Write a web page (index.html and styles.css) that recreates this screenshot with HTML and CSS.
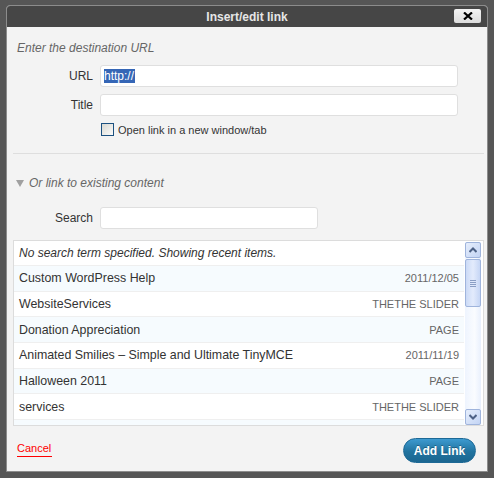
FILE: index.html
```html
<!DOCTYPE html>
<html>
<head>
<meta charset="utf-8">
<link rel="stylesheet" href="styles.css">
</head>
<body>
<div class="dialog">
  <div class="titlebar">
    <span class="title">Insert/edit link</span>
    <button class="close" type="button" aria-label="Close">
      <svg width="10" height="8" viewBox="0 0 10 8"><path d="M1 0.5 L9 7.5 M9 0.5 L1 7.5" stroke="#000" stroke-width="2.2" fill="none"/></svg>
    </button>
  </div>
  <div class="content">
    <p class="hint">Enter the destination URL</p>
    <div class="form">
      <label class="lbl">URL</label>
      <div class="field"><span class="sel">http://</span></div>
      <label class="lbl">Title</label>
      <div class="field"></div>
      <span></span>
      <div class="check"><span class="box"></span><span>Open link in a new window/tab</span></div>
    </div>
    <div class="divider"></div>
    <p class="toggle"><span class="tri"></span>Or link to existing content</p>
    <div class="form search-form">
      <label class="lbl">Search</label>
      <div class="field"></div>
    </div>
    <div class="results">
      <ul class="list">
        <li class="row note">No search term specified. Showing recent items.</li>
        <li class="row alt"><span>Custom WordPress Help</span><span class="meta">2011/12/05</span></li>
        <li class="row"><span>WebsiteServices</span><span class="meta">THETHE SLIDER</span></li>
        <li class="row alt"><span>Donation Appreciation</span><span class="meta">PAGE</span></li>
        <li class="row"><span>Animated Smilies – Simple and Ultimate TinyMCE</span><span class="meta">2011/11/19</span></li>
        <li class="row alt"><span>Halloween 2011</span><span class="meta">PAGE</span></li>
        <li class="row"><span>services</span><span class="meta">THETHE SLIDER</span></li>
        <li class="row alt"></li>
      </ul>
      <div class="scrollbar">
        <div class="sb-btn"><svg width="8" height="6" viewBox="0 0 8 6"><path d="M0.5 5 L4 1.5 L7.5 5" stroke="#4d6185" stroke-width="2" fill="none"/></svg></div>
        <div class="sb-thumb"><span></span><span></span><span></span><span></span></div>
        <div class="sb-track"></div>
        <div class="sb-btn"><svg width="8" height="6" viewBox="0 0 8 6"><path d="M0.5 1 L4 4.5 L7.5 1" stroke="#4d6185" stroke-width="2" fill="none"/></svg></div>
      </div>
    </div>
    <div class="footer">
      <a class="cancel" href="#">Cancel</a>
      <button class="add" type="button">Add Link</button>
    </div>
  </div>
</div>
</body>
</html>
```

FILE: styles.css
```css
* { box-sizing: border-box; }
html, body { margin: 0; padding: 0; }
body {
  background: #565656;
  font-family: "Liberation Sans", Arial, sans-serif;
  width: 494px;
  height: 478px;
  overflow: hidden;
  padding-top: 5px;
  padding-left: 6px;
}
.dialog {
  width: 482px;
  border: 1px solid #8c8c8c;
  border-radius: 4px 4px 0 0;
  background: #f3f3f3;
}
.titlebar {
  position: relative;
  height: 21px;
  background: #464646;
  border-radius: 3px 3px 0 0;
  display: flex;
  align-items: center;
  justify-content: center;
}
.title {
  color: #e6e6e6;
  font-weight: bold;
  font-size: 12px;
  line-height: 14px;
  margin-top: 1px;
}
.close {
  position: absolute;
  right: 6px;
  top: 3px;
  width: 27px;
  height: 14px;
  padding: 0;
  border: none;
  border-radius: 2px;
  background: linear-gradient(#f4f4f4, #dcdcdc);
  display: flex;
  align-items: center;
  justify-content: center;
}
.content { display: flex; flex-direction: column; }
.hint {
  margin: 14px 0 0 10px;
  font-size: 12px;
  line-height: 14px;
  font-style: italic;
  color: #666;
}
.form {
  margin: 10px 0 0 10px;
  display: grid;
  grid-template-columns: 76px 358px;
  column-gap: 7px;
  row-gap: 7px;
  align-items: center;
}
.lbl {
  text-align: right;
  font-size: 12px;
  line-height: 14px;
  color: #333;
}
.field {
  height: 22px;
  background: #fff;
  border: 1px solid #dfdfdf;
  border-radius: 3px;
  padding: 3px 0 0 3px;
  font-size: 12px;
  line-height: 14px;
}
.sel { background: #3566b6; color: #fff; display: inline-block; padding-right: 1px; }
.check {
  display: flex;
  align-items: center;
  height: 13px;
  font-size: 11px;
  color: #333;
}
.box {
  width: 13px;
  height: 13px;
  margin-left: 1px;
  margin-right: 4px;
  border: 1px solid #1c5180;
  background: linear-gradient(135deg, #d9d9d2, #fbfbfb);
}
.divider {
  margin: 17px 3px 0 6px;
  height: 1px;
  background: #dedede;
}
.toggle {
  margin: 22px 0 0 9px;
  font-size: 12px;
  line-height: 14px;
  font-style: italic;
  color: #666;
  display: flex;
  align-items: center;
}
.tri {
  width: 0;
  height: 0;
  border-left: 4px solid transparent;
  border-right: 4px solid transparent;
  border-top: 7px solid #a0a0a0;
  margin-right: 5px;
  margin-top: 1px;
}
.search-form { margin-top: 17px; grid-template-columns: 76px 218px; }
.results {
  margin: 11px 0 0 6px;
  width: 471px;
  height: 186px;
  border: 1px solid #dcdcdc;
  background: #fff;
  display: flex;
}
.list {
  list-style: none;
  margin: 0;
  padding: 0;
  flex: 1;
  overflow: hidden;
}
.row {
  height: 25.66px;
  border-bottom: 1px solid #efefef;
  display: flex;
  align-items: center;
  justify-content: space-between;
  padding: 0 5px 0 5px;
  font-size: 12.4px;
  color: #333;
  background: #fff;
}
.row.alt { background: #f6fbfe; }
.row.note { height: 25px; font-style: italic; font-size: 12px; }
.meta { font-size: 11px; color: #666; }
.scrollbar {
  width: 16px;
  margin: 1px 2px 0 1px;
  display: flex;
  flex-direction: column;
  background: linear-gradient(90deg, #eef4fe, #fafcff 60%, #e9f0fd);
}
.sb-btn {
  height: 16px;
  border: 1px solid #9fb4dc;
  border-radius: 2px;
  background: linear-gradient(135deg, #e6eefc, #c3d4f4);
  display: flex;
  align-items: center;
  justify-content: center;
}
.sb-thumb {
  margin-top: 1px;
  height: 48px;
  border: 1px solid #9fb4dc;
  border-radius: 2px;
  background: linear-gradient(90deg, #cbdaf6, #e3ebfc 50%, #c6d6f5);
  display: flex;
  flex-direction: column;
  align-items: center;
  justify-content: center;
  gap: 1px;
}
.sb-thumb span { width: 6px; height: 1px; background: #8a9ec4; }
.sb-track { flex: 1; }
.footer {
  height: 45px;
  display: flex;
  align-items: center;
  justify-content: space-between;
  padding: 2px 11px 0 10px;
}
.cancel {
  color: #f00;
  font-size: 11px;
  line-height: 13px;
  text-decoration: none;
  border-bottom: 1px solid #f00;
  padding: 0 1px 1px 0;
  margin-bottom: 1px;
}
.add {
  width: 73px;
  height: 25px;
  border: 1px solid #1d6996;
  border-radius: 13px;
  background: linear-gradient(#3d9ad0, #21739f 55%, #1b6690);
  color: #fff;
  font-family: "Liberation Sans", Arial, sans-serif;
  font-weight: bold;
  font-size: 12px;
  text-shadow: 0 -1px 0 rgba(0,0,0,0.3);
  padding: 0;
  margin-top: 2px;
}
```
